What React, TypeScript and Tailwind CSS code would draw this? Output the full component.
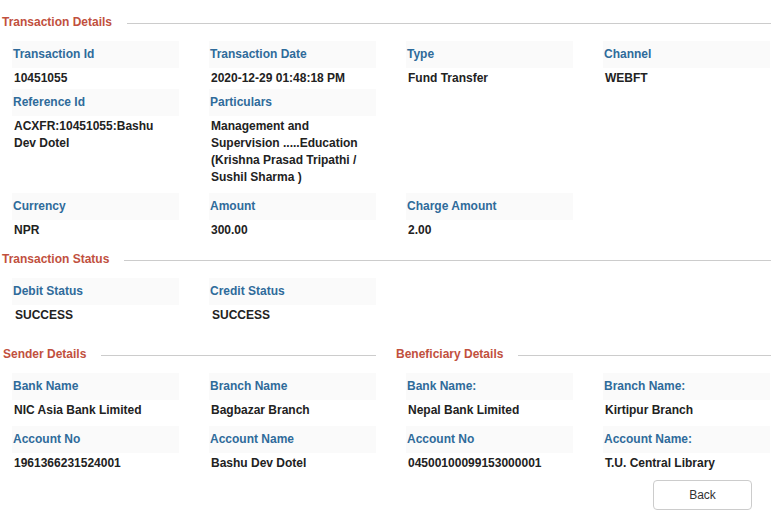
import React from "react";

type Field = { label: string; value: React.ReactNode };

function Heading({ title, className = "" }: { title: string; className?: string }) {
  return (
    <div className={`flex items-center h-[18px] ${className}`}>
      <span className="text-[12px] font-bold text-[#c1503e] leading-[16px] pt-[2px] whitespace-nowrap">{title}</span>
      <div className="flex-1 ml-[15px] mt-[4px] h-px bg-[#cccccc]" />
    </div>
  );
}

function Label({ children }: { children: React.ReactNode }) {
  return (
    <div className="h-[27px] bg-[#fafafa] flex items-center pl-px pb-[2px] text-[12px] font-bold text-[#2f6b9a]">
      {children}
    </div>
  );
}

function Value({ children, h }: { children?: React.ReactNode; h: string }) {
  return <div className={`pl-[2px] pr-[12px] pt-[2px] text-[12px] font-bold leading-[17px] text-[#222222] ${h}`}>{children}</div>;
}

function Row({ fields, h, cols }: { fields: Field[]; h: string; cols: string }) {
  return (
    <div className={`grid ${cols} gap-x-[30px]`}>
      {fields.map((f, i) => (
        <div key={i}>
          <Label>{f.label}</Label>
          <Value h={h}>{f.value}</Value>
        </div>
      ))}
    </div>
  );
}

export default function App() {
  const four = "grid-cols-[167px_167px_167px_167px]";
  const two = "grid-cols-[167px_167px]";
  return (
    <div className="w-[771px] h-[517px] bg-white pt-[12px] overflow-hidden" style={{ fontFamily: '"Liberation Sans", Arial, sans-serif' }}>
      <Heading title="Transaction Details" className="pl-[2px]" />
      <div className="mt-[11px] pl-[12px]">
        <Row
          cols={four}
          h="h-[21px]"
          fields={[
            { label: "Transaction Id", value: "10451055" },
            { label: "Transaction Date", value: "2020-12-29 01:48:18 PM" },
            { label: "Type", value: "Fund Transfer" },
            { label: "Channel", value: "WEBFT" },
          ]}
        />
        <div className={`grid ${four} gap-x-[30px]`}>
          <div>
            <Label>Reference Id</Label>
            <Value h="h-[77px]">ACXFR:10451055:Bashu Dev Dotel</Value>
          </div>
          <div>
            <Label>Particulars</Label>
            <Value h="h-[77px]">
              Management and Supervision .....Education (Krishna Prasad Tripathi / Sushil Sharma )
            </Value>
          </div>
        </div>
        <Row
          cols={four}
          h="h-[21px]"
          fields={[
            { label: "Currency", value: "NPR" },
            { label: "Amount", value: "300.00" },
            { label: "Charge Amount", value: "2.00" },
          ]}
        />
      </div>

      <Heading title="Transaction Status" className="pl-[2px] mt-[8px]" />
      <div className="mt-[11px] pl-[12px]">
        <Row
          cols={four}
          h="h-[21px]"
          fields={[
            { label: "Debit Status", value: <span className="pl-px">SUCCESS</span> },
            { label: "Credit Status", value: <span className="pl-px">SUCCESS</span> },
          ]}
        />
      </div>

      <div className="flex mt-[18px]">
        <div className="w-[376px]">
          <Heading title="Sender Details" className="pl-[3px]" />
          <div className="mt-[11px] pl-[12px]">
            <Row
              cols={two}
              h="h-[26px]"
              fields={[
                { label: "Bank Name", value: "NIC Asia Bank Limited" },
                { label: "Branch Name", value: "Bagbazar Branch" },
              ]}
            />
            <Row
              cols={two}
              h="h-[21px]"
              fields={[
                { label: "Account No", value: "1961366231524001" },
                { label: "Account Name", value: "Bashu Dev Dotel" },
              ]}
            />
          </div>
        </div>
        <div className="flex-1 ml-[18px]">
          <Heading title="Beneficiary Details" className="pl-[2px]" />
          <div className="mt-[11px] pl-[12px]">
            <Row
              cols={two}
              h="h-[26px]"
              fields={[
                { label: "Bank Name:", value: "Nepal Bank Limited" },
                { label: "Branch Name:", value: "Kirtipur Branch" },
              ]}
            />
            <Row
              cols={two}
              h="h-[21px]"
              fields={[
                { label: "Account No", value: "04500100099153000001" },
                { label: "Account Name:", value: "T.U. Central Library" },
              ]}
            />
          </div>
        </div>
      </div>

      <div className="mt-[6px] pl-[653px]">
        <button className="w-[99px] h-[30px] rounded-[4px] border border-[#cccccc] bg-white text-[12px] text-[#333333]">
          Back
        </button>
      </div>
    </div>
  );
}
